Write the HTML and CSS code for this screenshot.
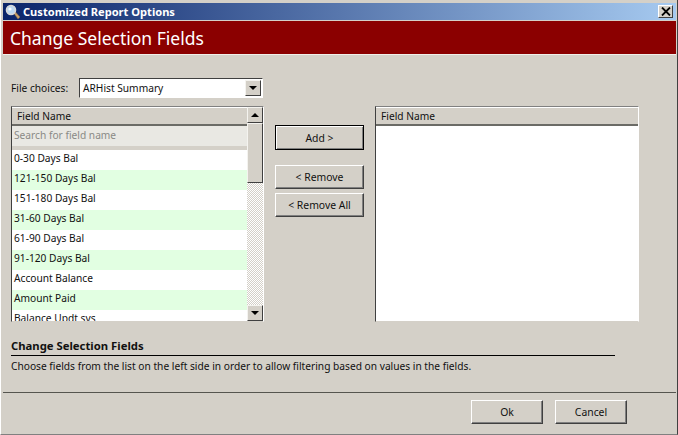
FILE: index.html
```html
<!DOCTYPE html>
<html>
<head>
    <title>Customized Report Options</title>
    <link rel="stylesheet" href="styles.css">
</head>
<body>
    <div class="window">
        <div class="titlebar">
            <svg class="title-icon" width="16" height="16" viewBox="0 0 16 16">
                <path d="M9 9.5l1.5-1.5 4.5 5-2 2z" fill="#c9a06a" stroke="#8a6a40" stroke-width="0.5"></path>
                <circle cx="6" cy="6" r="4.5" fill="#bcd8f2" stroke="#d8d8d8" stroke-width="1.6"></circle>
                <circle cx="5" cy="5" r="1.6" fill="#f4fbff"></circle>
            </svg>
            <span class="title-text">Customized Report Options</span>
            <button class="close-btn">
                <svg width="10" height="9" viewBox="0 0 10 9">
                    <path d="M1 0.5l8 8M9 0.5l-8 8" stroke="#000" stroke-width="1.8" fill="none"></path>
                </svg>
            </button>
        </div>
        <div class="banner">Change Selection Fields</div>

        <div class="content">
            <div class="file-row">
                <label class="file-label">File choices:</label>
                <div class="combo">
                    <span class="combo-value">ARHist Summary</span>
                    <span class="scroll-btn combo-btn"><span class="arrow-down"></span></span>
                </div>
            </div>

            <div class="pickers">
                <div class="list left-list">
                    <div class="list-main">
                        <div class="list-header">Field Name</div>
                        <div class="search-row">Search for field name</div>
                        <div class="rows">
                            <div class="row">0-30 Days Bal</div>
                            <div class="row alt">121-150 Days Bal</div>
                            <div class="row">151-180 Days Bal</div>
                            <div class="row alt">31-60 Days Bal</div>
                            <div class="row">61-90 Days Bal</div>
                            <div class="row alt">91-120 Days Bal</div>
                            <div class="row">Account Balance</div>
                            <div class="row alt">Amount Paid</div>
                            <div class="row">Balance Updt sys</div>
                        </div>
                    </div>
                    <div class="scrollbar">
                        <span class="scroll-btn"><span class="arrow-up"></span></span>
                        <span class="scroll-thumb"></span>
                        <span class="scroll-track"></span>
                        <span class="scroll-btn"><span class="arrow-down"></span></span>
                    </div>
                </div>

                <div class="move-buttons">
                    <button class="btn btn-default">Add &gt;</button>
                    <button class="btn">&lt; Remove</button>
                    <button class="btn">&lt; Remove All</button>
                </div>

                <div class="list right-list">
                    <div class="list-main">
                        <div class="list-header">Field Name</div>
                    </div>
                </div>
            </div>

            <div class="help">
                <div class="help-title">Change Selection Fields</div>
                <div class="help-text">Choose fields from the list on the left side in order to allow filtering based on values in the fields.</div>
            </div>
        </div>

        <div class="footer">
            <button class="btn btn-footer">Ok</button>
            <button class="btn btn-footer">Cancel</button>
        </div>
    </div>
</body>
</html>
```

FILE: styles.css
```css
html, body {
    margin: 0;
    padding: 0;
    height: 100%;
    overflow: hidden;
}
body {
    font-family: "Noto Sans", sans-serif;
    font-size: 10.2px;
    color: #111;
    background-color: #d4d0c8;
}
.window {
    width: 678px;
    height: 435px;
    box-sizing: border-box;
    padding: 3px 1px 1px 2px;
    border-left: 1px solid #fff;
    border-right: 1px solid #404040;
    border-bottom: 1px solid #808080;
    display: flex;
    flex-direction: column;
    background-color: #d4d0c8;
}
.titlebar {
    height: 17px;
    display: flex;
    align-items: center;
    padding-left: 2px;
    background: linear-gradient(to right, #0a246a, #a6caf0);
    color: #fff;
    font-weight: 700;
    font-size: 11.1px;
    flex-shrink: 0;
}
.title-icon {
    margin-right: 2px;
}
.title-text {
    flex: 1;
}
.close-btn {
    width: 15px;
    height: 13px;
    margin-right: 3px;
    padding: 0;
    display: flex;
    align-items: center;
    justify-content: center;
    background-color: #d4d0c8;
    border: 1px solid;
    border-color: #fff #404040 #404040 #fff;
}
.banner {
    height: 33px;
    margin-top: 1px;
    padding-left: 7px;
    display: flex;
    align-items: center;
    background-color: #8b0000;
    color: #fff;
    font-size: 17.5px;
    flex-shrink: 0;
    border-bottom: 1px solid #f0efea;
}
.content {
    flex: 1;
    padding: 23px 0 0 8px;
    display: flex;
    flex-direction: column;
}
.file-row {
    display: flex;
    align-items: center;
    height: 20px;
}
.file-label {
    width: 68px;
}
.combo {
    width: 184px;
    height: 20px;
    box-sizing: border-box;
    display: flex;
    align-items: center;
    justify-content: space-between;
    padding: 0 1px 0 3px;
    background-color: #fff;
    border: 1px solid;
    border-color: #404040 #fff #fff #404040;
}
.pickers {
    display: flex;
    align-items: flex-start;
    margin-top: 8px;
}
.list {
    height: 216px;
    box-sizing: border-box;
    display: flex;
    background-color: #fff;
    border: 1px solid;
    border-color: #808080 #fff #d4d0c8 #404040;
    overflow: hidden;
}
.left-list {
    width: 253px;
}
.right-list {
    width: 264px;
}
.list-main {
    flex: 1;
    min-width: 0;
    display: flex;
    flex-direction: column;
}
.list-header {
    height: 19px;
    box-sizing: border-box;
    padding-left: 5px;
    line-height: 16px;
    background-color: #d4d0c8;
    border-top: 1px solid #fff;
    border-bottom: 2px solid #6b6b66;
    flex-shrink: 0;
}
.search-row {
    height: 24px;
    box-sizing: border-box;
    padding: 1px 0 0 2px;
    line-height: 16px;
    color: #8a8a86;
    background-color: #e9e8e3;
    border-bottom: 4px solid #d4d0c8;
    flex-shrink: 0;
}
.row {
    height: 20px;
    line-height: 17px;
    padding-left: 2px;
    flex-shrink: 0;
}
.row.alt {
    background-color: #e2ffe2;
}
.scrollbar {
    width: 16px;
    display: flex;
    flex-direction: column;
    flex-shrink: 0;
}
.scroll-btn {
    width: 16px;
    height: 16px;
    box-sizing: border-box;
    display: flex;
    align-items: center;
    justify-content: center;
    background-color: #d4d0c8;
    border: 1px solid;
    border-color: #f4f3ef #404040 #404040 #f4f3ef;
    flex-shrink: 0;
}
.combo-btn {
    height: 16px;
}
.arrow-up, .arrow-down {
    width: 0;
    height: 0;
    border-left: 4px solid transparent;
    border-right: 4px solid transparent;
}
.arrow-up {
    border-bottom: 4px solid #000;
}
.arrow-down {
    border-top: 4px solid #000;
}
.scroll-thumb {
    height: 60px;
    box-sizing: border-box;
    background-color: #d4d0c8;
    border: 1px solid;
    border-color: #f4f3ef #404040 #404040 #f4f3ef;
    flex-shrink: 0;
}
.scroll-track {
    flex: 1;
    background-color: #fff;
    background-image: repeating-conic-gradient(#d4d0c8 0 25%, #fff 0 50%);
    background-size: 2px 2px;
}
.move-buttons {
    width: 111px;
    flex-shrink: 0;
    display: flex;
    flex-direction: column;
    align-items: center;
    gap: 4px;
    padding-top: 19px;
}
.btn {
    width: 89px;
    height: 24px;
    padding: 0;
    font-family: inherit;
    font-size: 10.4px;
    color: #111;
    background-color: #d4d0c8;
    border: 1px solid;
    border-color: #fff #404040 #404040 #fff;
    box-shadow: inset -1px -1px 0 #808080;
}
.btn-default {
    height: 25px;
    margin-bottom: 11px;
    border: 1px solid #000;
    box-shadow: inset 1px 1px 0 #fff, inset -1px -1px 0 #808080;
}
.help {
    margin-top: 17px;
    width: 604px;
}
.help-title {
    font-weight: 700;
    font-size: 11.3px;
    height: 16px;
    line-height: 14px;
    border-bottom: 1px solid #000;
}
.help-text {
    margin-top: 3px;
    line-height: 15px;
}
.footer {
    height: 41px;
    flex-shrink: 0;
    box-sizing: border-box;
    display: flex;
    justify-content: flex-end;
    align-items: flex-start;
    gap: 12px;
    padding: 7px 49px 0 0;
    border-top: 1px solid #55554f;
}
.btn-footer {
    width: 72px;
}
```
